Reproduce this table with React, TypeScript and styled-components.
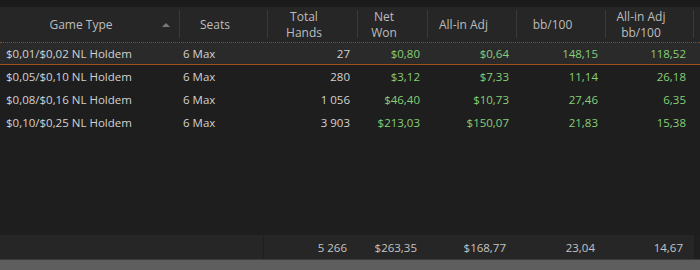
import * as React from 'react';
import styled, { createGlobalStyle } from 'styled-components';

const GlobalStyle = createGlobalStyle`
  html, body {
    margin: 0;
    padding: 0;
    background: #1e1e1e;
  }
  body {
    font-family: 'Open Sans', 'Noto Sans', sans-serif;
  }
`;

const columns = '180px 88px 90px 70px 89px 89px 88px 1fr';

const Page = styled.div`
  width: 700px;
  height: 270px;
  display: flex;
  flex-direction: column;
  background: #1e1e1e;
  overflow: hidden;
`;

const TopStrip = styled.div`
  height: 7px;
  background: #1b1b1b;
`;

const HeaderRow = styled.div`
  display: grid;
  grid-template-columns: ${columns};
  height: 35px;
  background: #262626;
`;

const HeaderCell = styled.div<{ $last?: boolean }>`
  position: relative;
  display: flex;
  align-items: center;
  justify-content: center;
  padding-right: 18px;
  text-align: center;
  font-size: 12px;
  line-height: 16px;
  color: #bdbdbd;
  &::after {
    content: '';
    display: ${p => (p.$last ? 'none' : 'block')};
    position: absolute;
    right: 0;
    top: 3px;
    bottom: 4px;
    width: 1px;
    background: #3a3a3a;
  }
`;

const SortArrow = styled.span`
  position: absolute;
  right: 10px;
  top: 16px;
  width: 0;
  height: 0;
  border-left: 4px solid transparent;
  border-right: 4px solid transparent;
  border-bottom: 4px solid #7a7a7a;
`;

const Body = styled.div`
  flex: 1;
  display: flex;
  flex-direction: column;
`;

const Row = styled.div<{ $selected?: boolean }>`
  display: grid;
  grid-template-columns: ${columns};
  height: 23px;
  box-sizing: border-box;
  align-items: center;
  background: ${p => (p.$selected ? '#2a2a2a' : 'transparent')};
  border-top: 1px ${p => (p.$selected ? 'dotted #8a4a1c' : 'solid transparent')};
  border-bottom: 1px solid ${p => (p.$selected ? '#a0501a' : 'transparent')};
`;

const Cell = styled.div<{ $align?: 'left' | 'right'; $green?: boolean }>`
  font-size: 11.5px;
  color: ${p => (p.$green ? '#86cf76' : '#d2d2d2')};
  text-align: ${p => p.$align ?? 'right'};
  padding: ${p => (p.$align === 'left' ? '0 0 0 6px' : '0 8px 0 0')};
  white-space: nowrap;
`;

const SeatsCell = styled(Cell)`
  padding-left: 3px;
`;

const Footer = styled.div`
  display: grid;
  grid-template-columns: 264px 94px 70px 89px 89px 88px 1fr;
  height: 24px;
  align-items: center;
  background: #262626;
`;

const FooterCell = styled.div<{ $divider?: boolean; $dark?: boolean }>`
  height: 100%;
  display: flex;
  align-items: center;
  justify-content: flex-end;
  padding-right: 10px;
  font-size: 11.5px;
  color: #c4c4c4;
  border-right: 1px solid ${p => (p.$divider ? '#1f1f1f' : 'transparent')};
  background: ${p => (p.$dark ? '#1f1f1f' : 'transparent')};
`;

const Scrollbar = styled.div`
  height: 10px;
  background: #5e5e5e;
  border-top: 1px solid #3a3a3a;
`;

type GameRow = {
  game: string;
  seats: string;
  hands: string;
  net: string;
  allIn: string;
  bb: string;
  allInBb: string;
};

const rows: GameRow[] = [
  { game: '$0,01/$0,02 NL Holdem', seats: '6 Max', hands: '27', net: '$0,80', allIn: '$0,64', bb: '148,15', allInBb: '118,52' },
  { game: '$0,05/$0,10 NL Holdem', seats: '6 Max', hands: '280', net: '$3,12', allIn: '$7,33', bb: '11,14', allInBb: '26,18' },
  { game: '$0,08/$0,16 NL Holdem', seats: '6 Max', hands: '1 056', net: '$46,40', allIn: '$10,73', bb: '27,46', allInBb: '6,35' },
  { game: '$0,10/$0,25 NL Holdem', seats: '6 Max', hands: '3 903', net: '$213,03', allIn: '$150,07', bb: '21,83', allInBb: '15,38' },
];

const App: React.FC = () => {
  function buildRows() {
    return rows.map((row, i) => (
      <Row key={`row-${i}`} $selected={i === 0}>
        <Cell $align="left">{row.game}</Cell>
        <SeatsCell $align="left">{row.seats}</SeatsCell>
        <Cell>{row.hands}</Cell>
        <Cell $green>{row.net}</Cell>
        <Cell $green>{row.allIn}</Cell>
        <Cell $green>{row.bb}</Cell>
        <Cell $green>{row.allInBb}</Cell>
        <div />
      </Row>
    ));
  }

  return (
    <Page>
      <GlobalStyle />
      <TopStrip />
      <HeaderRow>
        <HeaderCell>
          Game Type
          <SortArrow />
        </HeaderCell>
        <HeaderCell>Seats</HeaderCell>
        <HeaderCell>Total<br />Hands</HeaderCell>
        <HeaderCell>Net<br />Won</HeaderCell>
        <HeaderCell>All-in Adj</HeaderCell>
        <HeaderCell>bb/100</HeaderCell>
        <HeaderCell>All-in Adj<br />bb/100</HeaderCell>
        <HeaderCell $last />
      </HeaderRow>
      <Body>{buildRows()}</Body>
      <Footer>
        <FooterCell $divider />
        <FooterCell>5 266</FooterCell>
        <FooterCell>$263,35</FooterCell>
        <FooterCell>$168,77</FooterCell>
        <FooterCell>23,04</FooterCell>
        <FooterCell>14,67</FooterCell>
        <FooterCell $dark />
      </Footer>
      <Scrollbar />
    </Page>
  );
};

export default App;
